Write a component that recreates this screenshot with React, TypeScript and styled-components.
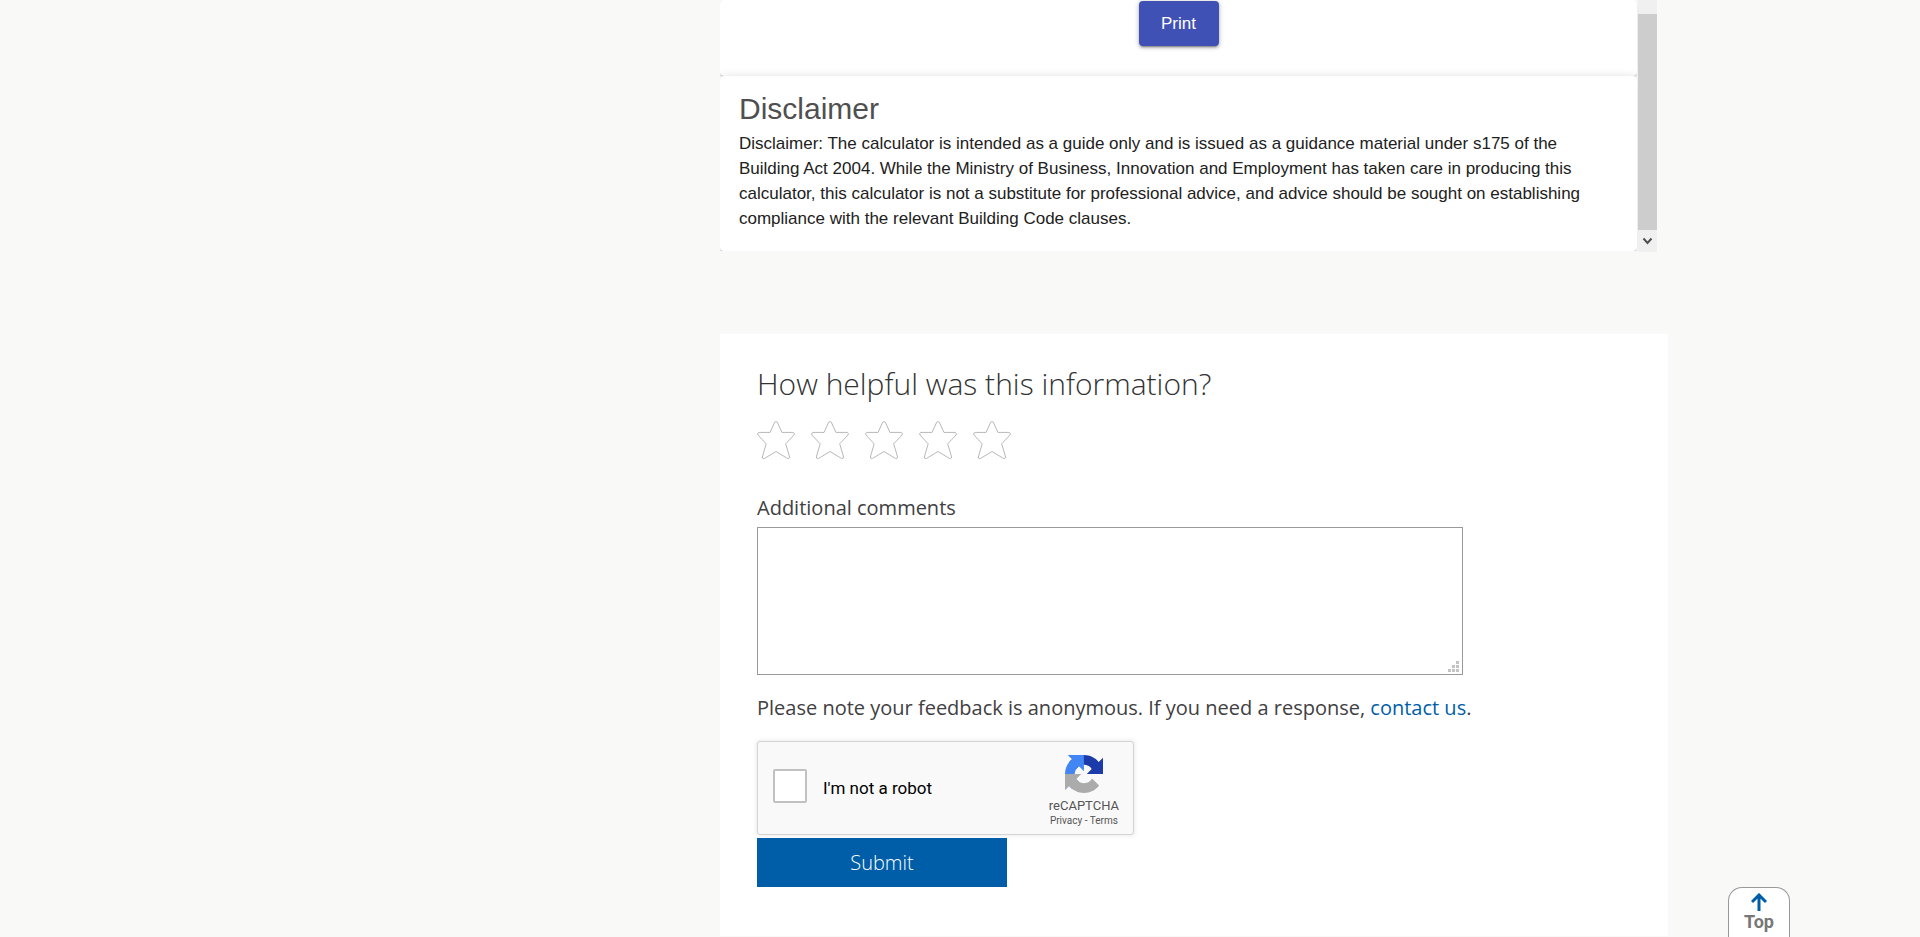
import React, { useState } from "react";
import styled, { createGlobalStyle } from "styled-components";

const heading = `"Open Sans", "Noto Sans", sans-serif`;
const copy = `"Open Sans", "Noto Sans", sans-serif`;
const arial = `"Liberation Sans", Arial, sans-serif`;
const roboto = `Roboto, "Liberation Sans", sans-serif`;

const GlobalStyle = createGlobalStyle`
  *, *::before, *::after { box-sizing: border-box; }
  body { margin: 0; background: #f9f9f7; color: #414042; font-family: ${copy}; }
  h2, p, fieldset { margin: 0; padding: 0; border: 0; }
`;

const Page = styled.main`
  display: flex;
  flex-direction: column;
  gap: 82px;
  margin: 0 252px 0 37.5%;
  padding-bottom: 1px;
`;

const CalculatorFrame = styled.section`
  display: flex;
  margin-right: 11px;
  overflow: hidden;
`;

const Cards = styled.div`
  flex: 1;
  display: flex;
  flex-direction: column;
  margin-bottom: 1px;
  padding-right: 1px;
  overflow: hidden;
  background: #fff;
`;

const Card = styled.div`
  padding: 16px 19px 20px;
  border-radius: 4px;
  background: #fff;
  box-shadow: 0 2px 1px -1px rgba(0, 0, 0, 0.2), 0 1px 1px rgba(0, 0, 0, 0.14), 0 0 8px rgba(0, 0, 0, 0.12);
`;

const PrintCard = styled(Card)`
  display: flex;
  justify-content: center;
  padding: 1px 0 30px;
`;

const PrintButton = styled.button`
  width: 80px;
  height: 45px;
  border: 0;
  border-radius: 4px;
  background: #3f51b5;
  color: #fff;
  font: 400 17px ${arial};
  box-shadow: 0 3px 1px -2px rgba(0, 0, 0, 0.2), 0 2px 2px rgba(0, 0, 0, 0.14), 0 1px 5px rgba(0, 0, 0, 0.3);
`;

const DisclaimerTitle = styled.h2`
  color: #4f4f4f;
  font: 400 30px/34px ${arial};
`;

const DisclaimerText = styled.p`
  padding-top: 5px;
  color: #212121;
  font: 400 17px/25px ${arial};
`;

const ScrollTrack = styled.div`
  flex: none;
  display: flex;
  flex-direction: column;
  align-items: center;
  width: 19px;
  padding-top: 14px;
  background: #f0f0f0;
`;

const ScrollThumb = styled.div`
  flex: 1;
  width: 100%;
  background: #cdcdcd;
`;

const ScrollDown = styled.svg`
  width: 19px;
  height: 22px;
`;

const Feedback = styled.form`
  display: flex;
  flex-direction: column;
  align-items: flex-start;
  padding: 32px 37px 49px;
  background: #fff;
`;

const Question = styled.h2`
  color: #333;
  font: 300 30px/36px ${heading};
`;

const Stars = styled.fieldset`
  display: flex;
  gap: 16px;
  padding: 19px 0 0;
`;

const StarLabel = styled.label`
  position: relative;
  width: 38px;
  height: 38px;
  cursor: pointer;
`;

const HiddenRadio = styled.input`
  position: absolute;
  inset: 0;
  margin: 0;
  opacity: 0;
`;

const StarIcon = styled.svg<{ $filled: boolean }>`
  display: block;
  fill: ${(p) => (p.$filled ? "#005ea8" : "none")};
  stroke: #b8b8b8;
`;

const CommentsLabel = styled.label`
  padding: 36px 0 6px;
  font: 400 20px/26px ${copy};
`;

const CommentsBox = styled.div`
  position: relative;
  width: 706px;
  max-width: 100%;
  height: 148px;
`;

const Comments = styled.textarea`
  display: block;
  width: 100%;
  height: 100%;
  padding: 8px;
  border: 1px solid #999;
  border-radius: 0;
  background: #fff;
  font: 400 20px/26px ${copy};
  resize: none;
`;

const Grip = styled.svg`
  position: absolute;
  right: 4px;
  bottom: 3px;
  fill: #c4c4c4;
  pointer-events: none;
`;

const Note = styled.p`
  padding: 20px 0;
  font: 400 20px/26px ${copy};
`;

const ContactLink = styled.a`
  color: #005ea8;
  text-decoration: none;
`;

const Captcha = styled.div`
  display: flex;
  align-items: center;
  width: 377px;
  height: 94px;
  margin-bottom: 3px;
  padding: 0 14px 0 15px;
  border: 1px solid #d3d3d3;
  border-radius: 3px;
  background: #f9f9f9;
  box-shadow: 0 0 4px 1px rgba(0, 0, 0, 0.08);
`;

const RobotLabel = styled.label`
  flex: 1;
  display: flex;
  align-items: center;
  gap: 16px;
  color: #000;
  font: 400 17px/22px ${roboto};
`;

const RobotCheck = styled.input`
  appearance: none;
  width: 34px;
  height: 34px;
  margin: 0 0 4px;
  border: 2px solid #c1c1c1;
  border-radius: 2px;
  background: #fff;
  &:checked { background: #4285f4; }
`;

const Brand = styled.div`
  display: flex;
  flex-direction: column;
  align-items: center;
  padding-top: 7px;
  color: #555;
  font: 400 13px/16px ${roboto};
`;

const BrandName = styled.span`
  padding-top: 5px;
`;

const Legal = styled.span`
  font-size: 10px;
  line-height: 14px;
`;

const LegalLink = styled.a`
  color: #555;
  text-decoration: none;
`;

const Submit = styled.button`
  width: 250px;
  height: 49px;
  border: 0;
  background: #005ea8;
  color: #fff;
  font: 300 20px ${heading};
`;

const TopLink = styled.a`
  position: fixed;
  right: 130px;
  bottom: 0;
  display: flex;
  flex-direction: column;
  align-items: center;
  width: 62px;
  height: 50px;
  padding-top: 5px;
  border: 1px solid #999;
  border-bottom: 0;
  border-radius: 14px 14px 0 0;
  background: #fff;
  color: #777;
  font: 700 18px/22px ${roboto};
  text-decoration: none;
`;

function Star({ value, rating, onRate }: { value: number; rating: number; onRate: (n: number) => void }) {
  return (
    <StarLabel>
      <HiddenRadio
        type="radio"
        name="rating"
        aria-label={`${value} out of 5`}
        checked={rating === value}
        onChange={() => onRate(value)}
      />
      <StarIcon $filled={rating >= value} width="38" height="38" viewBox="0 0 38 38" strokeLinejoin="round">
        <path d="M17.7 1.2Q19 -.1 20.3 1.2L24.9 11.4H36Q38 12 37.1 14L28.7 22.8L32.6 36Q32.6 38 30.4 37.4L19 30.5L7.6 37.4Q5.2 38 5.3 36L9.2 22.8L.9 14Q0 12 2 11.4H13.1Z" />
      </StarIcon>
    </StarLabel>
  );
}

export default function App() {
  const [rating, setRating] = useState(0);
  return (
    <>
      <GlobalStyle />
      <Page>
        <CalculatorFrame>
          <Cards>
            <PrintCard>
              <PrintButton type="button">Print</PrintButton>
            </PrintCard>
            <Card>
              <DisclaimerTitle>Disclaimer</DisclaimerTitle>
              <DisclaimerText>
                Disclaimer: The calculator is intended as a guide only and is issued as a guidance material under s175 of
                the Building Act 2004. While the Ministry of Business, Innovation and Employment has taken care in
                producing this calculator, this calculator is not a substitute for professional advice, and advice should
                be sought on establishing compliance with the relevant Building Code clauses.
              </DisclaimerText>
            </Card>
          </Cards>
          <ScrollTrack aria-hidden="true">
            <ScrollThumb />
            <ScrollDown viewBox="0 0 19 22" fill="none" stroke="#505050" strokeWidth="2">
              <path d="M5.5 8.5L9.5 13L13.5 8.5" />
            </ScrollDown>
          </ScrollTrack>
        </CalculatorFrame>

        <Feedback onSubmit={(e) => e.preventDefault()}>
          <Question id="question">How helpful was this information?</Question>
          <Stars aria-labelledby="question">
            {[1, 2, 3, 4, 5].map((n) => (
              <Star key={n} value={n} rating={rating} onRate={setRating} />
            ))}
          </Stars>
          <CommentsLabel htmlFor="comments">Additional comments</CommentsLabel>
          <CommentsBox>
            <Comments id="comments" />
            <Grip width="11" height="11" viewBox="0 0 11 11">
              <path d="M8 0h3v3H8zM4 4h3v3H4zM8 4h3v3H8zM0 8h3v3H0zM4 8h3v3H4zM8 8h3v3H8z" />
            </Grip>
          </CommentsBox>
          <Note>
            Please note your feedback is anonymous. If you need a response, <ContactLink href="#contact">contact us</ContactLink>.
          </Note>
          <Captcha>
            <RobotLabel>
              <RobotCheck type="checkbox" />
              I'm not a robot
            </RobotLabel>
            <Brand>
              <svg width="38" height="38" viewBox="0 0 64 64" aria-hidden="true">
                <path fill="#1c3aa9" d="M64 31.955l-.033-1.37V4.687l-7.16 7.16C50.948 4.674 42.033.093 32.05.093c-10.4 0-19.622 4.96-25.458 12.64l11.736 11.86a15.55 15.55 0 0 1 4.754-5.334c2.05-1.6 4.952-2.906 8.968-2.906.485 0 .86.057 1.135.163 4.976.393 9.288 3.14 11.828 7.124l-8.307 8.307L64 31.953" />
                <path fill="#4285f4" d="M31.862.094l-1.37.033H4.594l7.16 7.16C4.58 13.147 0 22.06 0 32.046c0 10.4 4.96 19.622 12.64 25.458L24.5 45.768a15.55 15.55 0 0 1-5.334-4.754c-1.6-2.05-2.906-4.952-2.906-8.968 0-.485.057-.86.163-1.135.393-4.976 3.14-9.288 7.124-11.828l8.307 8.307L31.86.095" />
                <path fill="#ababab" d="M.001 32.045l.033 1.37v25.898l7.16-7.16c5.86 7.173 14.774 11.754 24.76 11.754 10.4 0 19.622-4.96 25.458-12.64l-11.736-11.86a15.55 15.55 0 0 1-4.754 5.334c-2.05 1.6-4.952 2.906-8.968 2.906-.485 0-.86-.057-1.135-.163-4.976-.393-9.288-3.14-11.828-7.124l8.307-8.307c-10.522.04-22.4.066-27.295-.005" />
              </svg>
              <BrandName>reCAPTCHA</BrandName>
              <Legal>
                <LegalLink href="#privacy">Privacy</LegalLink> - <LegalLink href="#terms">Terms</LegalLink>
              </Legal>
            </Brand>
          </Captcha>
          <Submit type="submit">Submit</Submit>
        </Feedback>
      </Page>
      <TopLink href="#root">
        <svg width="16" height="18" viewBox="0 0 16 18" fill="none" stroke="#005ea8" strokeWidth="3" aria-hidden="true">
          <path d="M8 18V2M1 9L8 2L15 9" />
        </svg>
        Top
      </TopLink>
    </>
  );
}
